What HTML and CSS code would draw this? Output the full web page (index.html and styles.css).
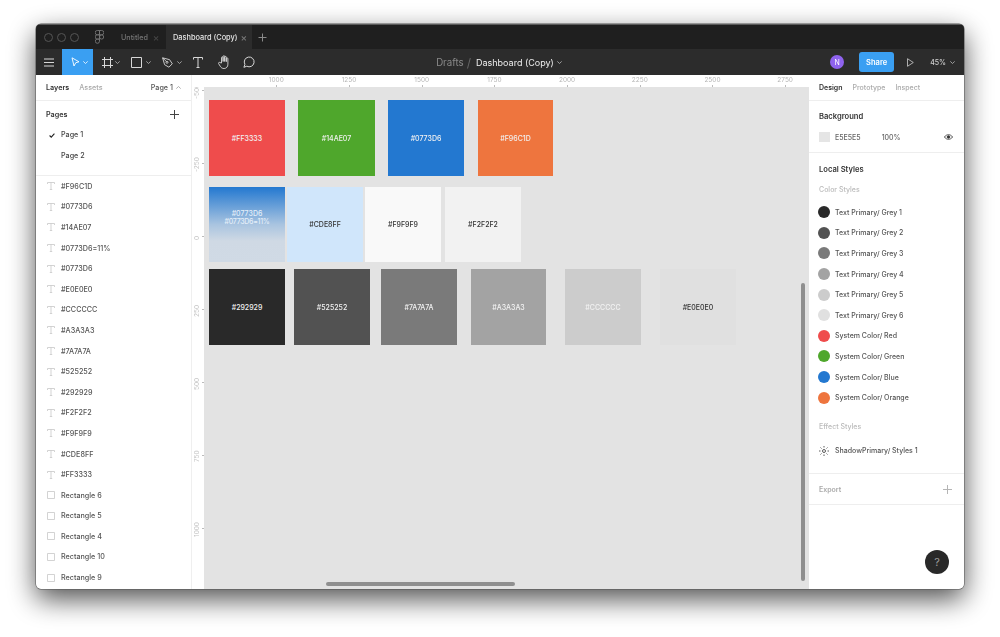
FILE: index.html
```html
<!DOCTYPE html>
<html lang="en">
<head>
    <meta charset="UTF-8">
    <title>Dashboard (Copy) - Figma</title>
    <link rel="stylesheet" href="styles.css">
</head>
<body>
    <div class="window">
        <!-- Title bar -->
        <div class="titlebar">
            <div class="lights"><span></span><span></span><span></span></div>
            <svg class="logo" width="9" height="14" viewBox="0 0 9 14" fill="none" stroke="#777" stroke-width="0.9">
                <path d="M4.5 .5H2.3a2.1 2.1 0 0 0 0 4.3h2.2zM4.5 .5h2.2a2.1 2.1 0 0 1 0 4.3H4.5zM4.5 4.8H2.3a2.1 2.1 0 0 0 0 4.3h2.2zM4.5 9.1H2.3a2.1 2.1 0 1 0 2.2 2.1z"/>
                <circle cx="6.6" cy="7" r="2.1"/>
            </svg>
            <div class="tab">Untitled<span class="tab-x">×</span></div>
            <div class="tab tab-active">Dashboard (Copy)<span class="tab-x">×</span></div>
            <svg class="tab-plus" width="9" height="9" viewBox="0 0 9 9" stroke="#8a8a8a"><path d="M4.5 .5v8M.5 4.5h8"/></svg>
        </div>

        <!-- Toolbar -->
        <div class="toolbar">
            <div class="tools">
                <svg class="menu" width="10" height="9" viewBox="0 0 10 9" stroke="#d8d8d8"><path d="M0 1h10M0 4.5h10M0 8h10"/></svg>
                <div class="tool-move">
                    <svg width="9" height="10" viewBox="0 0 9 10" fill="none" stroke="#fff" stroke-width=".9"><path d="M1 .8l7 4-3.2.9L3 9z"/></svg>
                    <svg class="chev" width="5" height="3" viewBox="0 0 5 3" fill="none" stroke="#fff" stroke-width=".8"><path d="M.3.4L2.5 2.5 4.7.4"/></svg>
                </div>
                <div class="tool tool-frame">
                    <svg width="11" height="11" viewBox="0 0 11 11" fill="none" stroke="#d8d8d8"><path d="M2.5 0v11M8.5 0v11M0 2.5h11M0 8.5h11"/></svg>
                    <svg class="chev" width="5" height="3" viewBox="0 0 5 3" fill="none" stroke="#bbb" stroke-width=".8"><path d="M.3.4L2.5 2.5 4.7.4"/></svg>
                </div>
                <div class="tool tool-rect">
                    <svg width="11" height="11" viewBox="0 0 11 11" fill="none" stroke="#d8d8d8"><path d="M.5.5h10v10H.5z"/></svg>
                    <svg class="chev" width="5" height="3" viewBox="0 0 5 3" fill="none" stroke="#bbb" stroke-width=".8"><path d="M.3.4L2.5 2.5 4.7.4"/></svg>
                </div>
                <div class="tool tool-pen">
                    <svg width="11" height="11" viewBox="0 0 11 11" fill="none" stroke="#d8d8d8" stroke-width=".9"><path d="M.6.8l7 1.9 2.7 4.1-3.4 3.4-4.3-2.5zM.6.8l3.8 3.8"/><circle cx="5" cy="5.3" r="1"/></svg>
                    <svg class="chev" width="5" height="3" viewBox="0 0 5 3" fill="none" stroke="#bbb" stroke-width=".8"><path d="M.3.4L2.5 2.5 4.7.4"/></svg>
                </div>
                <svg class="tool-t" width="10" height="11" viewBox="0 0 10 11" fill="none" stroke="#d8d8d8"><path d="M.5 2.5V.5h9v2M5 .5v10M3.5 10.5h3"/></svg>
                <svg class="tool-hand" width="13" height="14" viewBox="0 0 13 14" fill="none" stroke="#d8d8d8" stroke-width=".9"><path d="M3.5 8V2.7a.8.8 0 0 1 1.6 0V6.5V1.5a.8.8 0 0 1 1.6 0v5V2.2a.8.8 0 0 1 1.6 0v4.500V3.7a.8.8 0 0 1 1.6 0v5.5c0 2.5-1.5 4.3-3.8 4.3-2 0-3-.8-3.9-2.3L.6 8.6c-.5-.9.7-1.7 1.4-1z"/></svg>
                <svg class="tool-comment" width="12" height="12" viewBox="0 0 12 12" fill="none" stroke="#d8d8d8"><path d="M.9 11.3l1-3a4.9 4.9 0 1 1 1.9 1.9z"/></svg>
            </div>
            <div class="breadcrumb">
                <span class="crumb-dim">Drafts</span>
                <span class="crumb-slash">/</span>
                <span class="crumb-file">Dashboard (Copy)</span>
                <svg width="5" height="3" viewBox="0 0 5 3" fill="none" stroke="#bbb" stroke-width=".8"><path d="M.3.4L2.5 2.5 4.7.4"/></svg>
            </div>
            <div class="actions">
                <div class="avatar">N</div>
                <div class="share">Share</div>
                <svg class="play" width="7" height="9" viewBox="0 0 7 9" fill="none" stroke="#cfcfcf" stroke-width=".8"><path d="M.5.7l5.8 3.8L.5 8.3z"/></svg>
                <div class="zoom">45%<svg width="5" height="3" viewBox="0 0 5 3" fill="none" stroke="#bbb" stroke-width=".8"><path d="M.3.4L2.5 2.5 4.7.4"/></svg></div>
            </div>
        </div>

        <div class="main">
            <!-- Left panel -->
            <aside class="left-panel">
                <div class="panel-tabs">
                    <span class="tab-on">Layers</span>
                    <span class="tab-off">Assets</span>
                    <span class="page-pick">Page 1<svg width="5" height="3" viewBox="0 0 5 3" fill="none" stroke="#999" stroke-width=".8"><path d="M.3 2.6L2.5.5 4.7 2.6"/></svg></span>
                </div>
                <div class="pages">
                    <div class="pages-head">
                        <span class="tab-on">Pages</span>
                        <svg width="9" height="9" viewBox="0 0 9 9" stroke="#444"><path d="M4.5 0v9M0 4.5h9"/></svg>
                    </div>
                    <div class="page-row">
                        <svg class="check" width="6" height="5" viewBox="0 0 7 6" fill="none" stroke="#222" stroke-width="1.3"><path d="M.6 3l2 2L6.4.8"/></svg>
                        Page 1
                    </div>
                    <div class="page-row">Page 2</div>
                </div>
                <ul class="layers">
                    <li><svg class="ico" viewBox="0 0 8 8"><path d="M.5 2V.5h7V2M4 .5v7M2.8 7.5h2.4"/></svg>#F96C1D</li>
                    <li><svg class="ico" viewBox="0 0 8 8"><path d="M.5 2V.5h7V2M4 .5v7M2.8 7.5h2.4"/></svg>#0773D6</li>
                    <li><svg class="ico" viewBox="0 0 8 8"><path d="M.5 2V.5h7V2M4 .5v7M2.8 7.5h2.4"/></svg>#14AE07</li>
                    <li><svg class="ico" viewBox="0 0 8 8"><path d="M.5 2V.5h7V2M4 .5v7M2.8 7.5h2.4"/></svg>#0773D6=11%</li>
                    <li><svg class="ico" viewBox="0 0 8 8"><path d="M.5 2V.5h7V2M4 .5v7M2.8 7.5h2.4"/></svg>#0773D6</li>
                    <li><svg class="ico" viewBox="0 0 8 8"><path d="M.5 2V.5h7V2M4 .5v7M2.8 7.5h2.4"/></svg>#E0E0E0</li>
                    <li><svg class="ico" viewBox="0 0 8 8"><path d="M.5 2V.5h7V2M4 .5v7M2.8 7.5h2.4"/></svg>#CCCCCC</li>
                    <li><svg class="ico" viewBox="0 0 8 8"><path d="M.5 2V.5h7V2M4 .5v7M2.8 7.5h2.4"/></svg>#A3A3A3</li>
                    <li><svg class="ico" viewBox="0 0 8 8"><path d="M.5 2V.5h7V2M4 .5v7M2.8 7.5h2.4"/></svg>#7A7A7A</li>
                    <li><svg class="ico" viewBox="0 0 8 8"><path d="M.5 2V.5h7V2M4 .5v7M2.8 7.5h2.4"/></svg>#525252</li>
                    <li><svg class="ico" viewBox="0 0 8 8"><path d="M.5 2V.5h7V2M4 .5v7M2.8 7.5h2.4"/></svg>#292929</li>
                    <li><svg class="ico" viewBox="0 0 8 8"><path d="M.5 2V.5h7V2M4 .5v7M2.8 7.5h2.4"/></svg>#F2F2F2</li>
                    <li><svg class="ico" viewBox="0 0 8 8"><path d="M.5 2V.5h7V2M4 .5v7M2.8 7.5h2.4"/></svg>#F9F9F9</li>
                    <li><svg class="ico" viewBox="0 0 8 8"><path d="M.5 2V.5h7V2M4 .5v7M2.8 7.5h2.4"/></svg>#CDE8FF</li>
                    <li><svg class="ico" viewBox="0 0 8 8"><path d="M.5 2V.5h7V2M4 .5v7M2.8 7.5h2.4"/></svg>#FF3333</li>
                    <li><svg class="ico" viewBox="0 0 8 8"><path d="M.5.5h7v7H.5z"/></svg>Rectangle 6</li>
                    <li><svg class="ico" viewBox="0 0 8 8"><path d="M.5.5h7v7H.5z"/></svg>Rectangle 5</li>
                    <li><svg class="ico" viewBox="0 0 8 8"><path d="M.5.5h7v7H.5z"/></svg>Rectangle 4</li>
                    <li><svg class="ico" viewBox="0 0 8 8"><path d="M.5.5h7v7H.5z"/></svg>Rectangle 10</li>
                    <li><svg class="ico" viewBox="0 0 8 8"><path d="M.5.5h7v7H.5z"/></svg>Rectangle 9</li>
                </ul>
            </aside>

            <!-- Canvas with rulers -->
            <section class="stage">
                <div class="ruler-top">
                    <span>1000</span><span>1250</span><span>1500</span><span>1750</span>
                    <span>2000</span><span>2250</span><span>2500</span><span>2750</span>
                </div>
                <div class="stage-body">
                    <div class="ruler-left">
                        <span>-500</span><span>-250</span><span>0</span><span>250</span>
                        <span>500</span><span>750</span><span>1000</span>
                    </div>
                    <div class="canvas">
                        <div class="swatch sw-red">#FF3333</div>
                        <div class="swatch sw-green">#14AE07</div>
                        <div class="swatch sw-blue">#0773D6</div>
                        <div class="swatch sw-orange">#F96C1D</div>
                        <div class="swatch sw-gradient"><div>#0773D6<br><span class="tight">#0773D6=11%</span></div></div>
                        <div class="swatch sw-sky">#CDE8FF</div>
                        <div class="swatch sw-f9">#F9F9F9</div>
                        <div class="swatch sw-f2">#F2F2F2</div>
                        <div class="swatch sw-g1">#292929</div>
                        <div class="swatch sw-g2">#525252</div>
                        <div class="swatch sw-g3">#7A7A7A</div>
                        <div class="swatch sw-g4">#A3A3A3</div>
                        <div class="swatch sw-g5">#CCCCCC</div>
                        <div class="swatch sw-g6">#E0E0E0</div>
                        <div class="scroll-v"></div>
                        <div class="scroll-h"></div>
                    </div>
                </div>
            </section>

            <!-- Right panel -->
            <aside class="right-panel">
                <div class="panel-tabs right-tabs">
                    <span class="tab-on">Design</span>
                    <span class="tab-off">Prototype</span>
                    <span class="tab-off">Inspect</span>
                </div>
                <div class="section bg-section">
                    <div class="section-title">Background</div>
                    <div class="bg-row">
                        <span class="bg-chip"></span>
                        <span class="bg-hex">E5E5E5</span>
                        <span class="bg-pct">100%</span>
                        <svg class="eye" width="9" height="6" viewBox="0 0 9 6" fill="none" stroke="#333" stroke-width=".8"><path d="M.4 3C2.5-.1 6.5-.1 8.6 3 6.5 6.1 2.5 6.1.4 3z"/><circle cx="4.5" cy="3" r="1.3" fill="#333"/></svg>
                    </div>
                </div>
                <div class="section styles-section">
                    <div class="section-title">Local Styles</div>
                    <div class="section-sub">Color Styles</div>
                    <ul class="styles-list">
                        <li><span class="dot dot-g1"></span>Text Primary/ Grey 1</li>
                        <li><span class="dot dot-g2"></span>Text Primary/ Grey 2</li>
                        <li><span class="dot dot-g3"></span>Text Primary/ Grey 3</li>
                        <li><span class="dot dot-g4"></span>Text Primary/ Grey 4</li>
                        <li><span class="dot dot-g5"></span>Text Primary/ Grey 5</li>
                        <li><span class="dot dot-g6"></span>Text Primary/ Grey 6</li>
                        <li><span class="dot dot-red"></span>System Color/ Red</li>
                        <li><span class="dot dot-green"></span>System Color/ Green</li>
                        <li><span class="dot dot-blue"></span>System Color/ Blue</li>
                        <li><span class="dot dot-orange"></span>System Color/ Orange</li>
                    </ul>
                    <div class="section-sub effect-sub">Effect Styles</div>
                    <div class="effect-row">
                        <svg width="10" height="10" viewBox="0 0 10 10" fill="none" stroke="#333" stroke-width=".8"><circle cx="5" cy="5" r="1.5"/><path d="M5 0v1.5M5 8.5V10M0 5h1.5M8.5 5H10M1.5 1.5l1 1M7.5 7.5l1 1M1.5 8.5l1-1M7.5 2.5l1-1"/></svg>
                        ShadowPrimary/ Styles 1
                    </div>
                </div>
                <div class="section export-section">
                    <span>Export</span>
                    <svg width="9" height="9" viewBox="0 0 9 9" stroke="#b5b5b5"><path d="M4.5 0v9M0 4.5h9"/></svg>
                </div>
                <div class="help">?</div>
            </aside>
        </div>
    </div>
</body>
</html>
```
FILE: styles.css
```css
html, body {
    margin: 0;
    padding: 0;
    height: 100%;
    overflow: hidden;
    background: #fff;
}

body {
    font-family: Inter, "Liberation Sans", sans-serif;
    font-size: 7.2px;
    color: #444;
    padding: 24px 36px 48px;
    box-sizing: border-box;
}

ul {
    list-style: none;
    margin: 0;
    padding: 0;
}

.window {
    width: 928px;
    height: 565px;
    border-radius: 5px;
    overflow: hidden;
    display: flex;
    flex-direction: column;
    background: #5a5a5a;
    box-shadow: 0 0 0 .5px #555, 0 10px 28px rgba(0, 0, 0, .7);
    filter: blur(.4px);
    opacity: .999;
}

/* title bar */
.titlebar {
    height: 24px;
    margin-top: 1px;
    background: #1f1f1f;
    display: flex;
    align-items: center;
    flex-shrink: 0;
}

.lights {
    display: flex;
    gap: 4px;
    margin-left: 8px;
}

.lights span {
    width: 7px;
    height: 7px;
    border: 1px solid #555;
    border-radius: 50%;
}

.logo {
    margin-left: 16px;
}

.tab {
    color: #777;
    font-size: 7.2px;
    font-weight: 500;
    height: 100%;
    display: flex;
    align-items: center;
    margin-left: 17px;
    width: 45px;
    white-space: nowrap;
}

.tab-x {
    color: #444;
    font-size: 10px;
    margin-left: 5px;
}

.tab-active {
    background: #2c2c2c;
    color: #e4e4e4;
    margin-left: 0;
    width: 86px;
    padding-left: 7px;
    box-sizing: border-box;
    font-size: 7.4px;
}

.tab-active .tab-x {
    color: #777;
    margin-left: 3px;
}

.tab-plus {
    margin-left: 6px;
}

/* toolbar */
.toolbar {
    height: 26px;
    background: #2c2c2c;
    flex-shrink: 0;
    display: grid;
    grid-template-columns: 1fr auto 1fr;
    align-items: center;
}

.tools {
    display: flex;
    align-items: center;
    height: 100%;
}

.menu {
    margin-left: 8px;
    margin-right: 8px;
}

.tool-move {
    width: 31px;
    height: 100%;
    background: #3a9ff2;
    display: flex;
    align-items: center;
    padding-left: 9px;
    box-sizing: border-box;
    gap: 3px;
}

.tool {
    display: flex;
    align-items: center;
    gap: 4px;
}

.tool-frame { margin-left: 9px; gap: 2px; }
.tool-rect { margin-left: 11px; gap: 3.5px; }
.tool-pen { margin-left: 11.5px; }
.tool-t { margin-left: 11px; }
.tool-hand { margin-left: 14.5px; }
.tool-comment { margin-left: 12.5px; }

.breadcrumb {
    display: flex;
    align-items: center;
    font-size: 9.7px;
    gap: 3px;
    margin-right: 2px;
}

.crumb-dim { color: #8a8a8a; }
.crumb-slash { color: #666; font-size: 12px; }
.crumb-file { color: #eee; font-size: 9px; margin-left: 2px; }

.actions {
    display: flex;
    align-items: center;
    justify-content: flex-end;
}

.avatar {
    width: 14px;
    height: 14px;
    border-radius: 50%;
    background: #8f63ee;
    color: #fff;
    font-size: 7px;
    display: flex;
    align-items: center;
    justify-content: center;
}

.share {
    width: 35px;
    height: 20px;
    margin-left: 15px;
    border-radius: 3px;
    background: #3a9ff2;
    color: #fff;
    font-size: 7.5px;
    font-weight: 600;
    display: flex;
    align-items: center;
    justify-content: center;
}

.play {
    margin-left: 13px;
}

.zoom {
    color: #cfcfcf;
    font-size: 7px;
    font-weight: 500;
    margin-left: 16px;
    margin-right: 9.5px;
    display: flex;
    align-items: center;
    gap: 3.5px;
}

/* main area */
.main {
    flex: 1;
    display: flex;
    min-height: 0;
    position: relative;
}

.left-panel,
.right-panel {
    width: 155px;
    flex-shrink: 0;
    background: #fff;
    overflow: hidden;
    font-weight: 500;
}

.panel-tabs {
    height: 26px;
    display: flex;
    align-items: center;
    padding: 0 10px;
    gap: 10px;
    border-bottom: 1px solid #eee;
    box-sizing: border-box;
}

.tab-on { color: #333; font-weight: 600; }
.tab-off { color: #aaa; font-weight: 500; }

.page-pick {
    margin-left: auto;
    color: #555;
    display: flex;
    align-items: center;
    gap: 3px;
}

.pages {
    height: 75px;
    border-bottom: 1px solid #eee;
    box-sizing: border-box;
}

.pages-head {
    display: flex;
    align-items: center;
    justify-content: space-between;
    padding: 8px 12px 0 10px;
    height: 18px;
    box-sizing: border-box;
}

.page-row {
    position: relative;
    height: 20.6px;
    line-height: 20.6px;
    padding-left: 25px;
    color: #444;
}

.pages-head + .page-row {
    margin-top: 6px;
}

.check {
    position: absolute;
    left: 13px;
    top: 8px;
}

.layers li {
    height: 20.6px;
    display: flex;
    align-items: center;
    color: #555;
}

.ico {
    width: 8px;
    height: 8px;
    margin: 0 6px 0 11px;
    fill: none;
    stroke: #c8c8c8;
    stroke-width: .8;
}

/* rulers and canvas */
.stage {
    flex: 1;
    display: flex;
    flex-direction: column;
    min-width: 0;
    border-left: 1px solid #efefef;
}

.ruler-top {
    height: 12px;
    flex-shrink: 0;
    padding-left: 48px;
    display: flex;
    overflow: hidden;
    background: #fff;
}

.ruler-top span {
    flex: 0 0 72.7px;
    text-align: center;
    font-size: 6.5px;
    color: #b5b5b5;
    line-height: 11px;
    position: relative;
}

.ruler-top span::after {
    content: "";
    position: absolute;
    left: 50%;
    bottom: 0;
    width: 1px;
    height: 2px;
    background: #bbb;
}

.stage-body {
    flex: 1;
    display: flex;
    min-height: 0;
}

.ruler-left {
    width: 12px;
    flex-shrink: 0;
    display: flex;
    flex-direction: column;
    overflow: hidden;
    background: #fff;
}

.ruler-left span {
    flex: 0 0 73px;
    writing-mode: vertical-rl;
    transform: rotate(180deg);
    text-align: center;
    font-size: 6.5px;
    color: #c5c5c5;
    line-height: 11px;
    position: relative;
}

.ruler-left span::after {
    content: "";
    position: absolute;
    left: 0;
    top: 50%;
    width: 2px;
    height: 1px;
    background: #bbb;
}

.ruler-left span:first-child {
    margin-top: -32px;
}

.canvas {
    flex: 1;
    position: relative;
    overflow: hidden;
    background: #e3e3e3;
}

/* swatches sit at their own spot on the design canvas */
.swatch {
    position: absolute;
    width: 76px;
    height: 76px;
    padding-top: 1px;
    box-sizing: border-box;
    display: flex;
    align-items: center;
    justify-content: center;
    text-align: center;
    font-size: 7px;
    font-weight: 500;
    line-height: 8px;
    color: #f2f2f2;
}

.sw-red { left: 5px; top: 13px; background: #ef4c4c; }
.sw-green { left: 94px; top: 13px; width: 77px; background: #4fa72c; }
.sw-blue { left: 184px; top: 13px; background: #2378d0; }
.sw-orange { left: 274px; top: 13px; width: 75px; background: #ee753e; }

.sw-gradient {
    left: 5px;
    top: 100px;
    height: 75px;
    padding-top: 0;
    padding-bottom: 14px;
    color: #e4eef8;
    background: linear-gradient(#2378d0, #a9c4e0 50%, #cfd9e4 72%, #d0dae5);
}

.tight {
    letter-spacing: -.3px;
}

.sw-sky { left: 83px; top: 100px; height: 75px; background: #d0e6fb; color: #333; }
.sw-f9 { left: 161px; top: 100px; height: 75px; background: #f9f9f9; color: #333; }
.sw-f2 { left: 241px; top: 100px; height: 75px; background: #f2f2f2; color: #333; }

.sw-g1 { left: 5px; top: 182px; background: #292929; }
.sw-g2 { left: 90px; top: 182px; background: #525252; }
.sw-g3 { left: 177px; top: 182px; background: #7a7a7a; }
.sw-g4 { left: 267px; top: 182px; width: 75px; background: #a3a3a3; }
.sw-g5 { left: 361px; top: 182px; background: #ccc; }
.sw-g6 { left: 456px; top: 182px; background: #e0e0e0; color: #333; }

.scroll-v {
    position: absolute;
    left: 597px;
    top: 196px;
    width: 4px;
    height: 298px;
    border-radius: 2px;
    background: #8f8f8f;
}

.scroll-h {
    position: absolute;
    left: 122px;
    top: 495px;
    width: 189px;
    height: 4px;
    border-radius: 2px;
    background: #8f8f8f;
}

/* right panel */
.right-panel {
    position: relative;
    font-size: 7px;
}

.section {
    border-bottom: 1px solid #eee;
    padding: 0 10px;
    box-sizing: border-box;
}

.section-title {
    color: #333;
    font-weight: 600;
    font-size: 7.6px;
}

.bg-section {
    height: 52px;
    padding-top: 11px;
}

.bg-row {
    display: flex;
    align-items: center;
    margin-top: 11px;
    color: #666;
}

.bg-chip {
    width: 11px;
    height: 10px;
    background: #e5e5e5;
}

.bg-hex { margin-left: 5px; }
.bg-pct { margin-left: 21px; }
.eye { margin-left: auto; margin-right: 1px; }

.styles-section {
    height: 321px;
    padding-top: 12px;
}

.section-sub {
    color: #bbb;
    margin-top: 11px;
}

.styles-list {
    margin-top: 8px;
}

.styles-list li {
    height: 20.6px;
    display: flex;
    align-items: center;
    color: #555;
}

.dot {
    width: 12px;
    height: 12px;
    margin-left: -1px;
    margin-right: 5px;
    border-radius: 50%;
}

.dot-g1 { background: #292929; }
.dot-g2 { background: #525252; }
.dot-g3 { background: #7a7a7a; }
.dot-g4 { background: #a3a3a3; }
.dot-g5 { background: #ccc; }
.dot-g6 { background: #e0e0e0; }
.dot-red { background: #ef4c4c; }
.dot-green { background: #4fa72c; }
.dot-blue { background: #2378d0; }
.dot-orange { background: #ee753e; }

.effect-sub {
    margin-top: 14px;
}

.effect-row {
    display: flex;
    align-items: center;
    gap: 6px;
    margin-top: 15px;
    color: #555;
}

.export-section {
    height: 31px;
    display: flex;
    align-items: center;
    justify-content: space-between;
    color: #aaa;
    font-weight: 600;
    padding-right: 12px;
}

.help {
    position: absolute;
    right: 15px;
    bottom: 15px;
    width: 24px;
    height: 24px;
    border-radius: 50%;
    background: #292929;
    color: #999;
    font-size: 11px;
    font-weight: 400;
    display: flex;
    align-items: center;
    justify-content: center;
}
```
